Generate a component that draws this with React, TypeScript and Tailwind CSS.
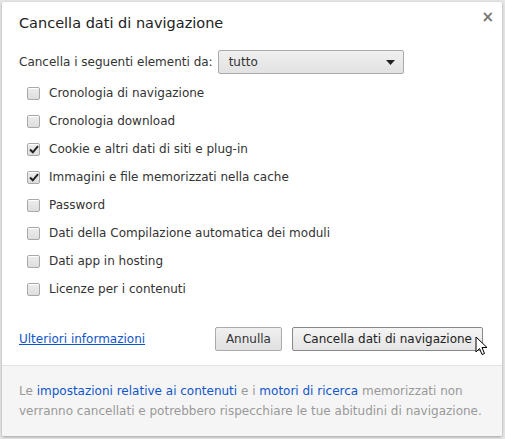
import React from 'react';

const items = [
  { label: 'Cronologia di navigazione', checked: false },
  { label: 'Cronologia download', checked: false },
  { label: 'Cookie e altri dati di siti e plug-in', checked: true },
  { label: 'Immagini e file memorizzati nella cache', checked: true },
  { label: 'Password', checked: false },
  { label: 'Dati della Compilazione automatica dei moduli', checked: false },
  { label: 'Dati app in hosting', checked: false },
  { label: 'Licenze per i contenuti', checked: false },
];

function Checkbox({ checked }: { checked: boolean }) {
  return (
    <span className="flex h-[13px] w-[13px] items-center justify-center rounded-[2px] border border-[#a8a8a8] bg-gradient-to-b from-[#ededed] to-[#dedede] shadow-[inset_0_1px_0_#fff]">
      {checked && (
        <svg width="10" height="9" viewBox="0 0 10 9">
          <path d="M1 4.5 L3.8 7.3 L9 1.2" fill="none" stroke="#222" strokeWidth="2" />
        </svg>
      )}
    </span>
  );
}

export default function App() {
  return (
    <div className="relative h-[439px] w-[505px] bg-[#e6e6e6] p-[2px] font-['DejaVu_Sans',sans-serif] text-[12px] text-[#333]">
      <div className="relative flex h-[434px] w-[500px] flex-col overflow-hidden rounded-[2px] bg-white shadow-[0_1px_3px_rgba(0,0,0,0.3)]">
        {/* close */}
        <span className="absolute right-[8px] top-[4px] text-[15px] font-bold text-[#777]">×</span>

        <div className="px-[17px] pt-[11px]">
          <h1 className="text-[14.5px] leading-[20px] text-[#222]">Cancella dati di navigazione</h1>

          <div className="mt-[17px] flex items-center gap-[5px]">
            <span>Cancella i seguenti elementi da:</span>
            <div className="flex h-[24px] w-[186px] items-center justify-between rounded-[2px] border border-[#aaa] bg-gradient-to-b from-[#f0f0f0] to-[#e2e2e2] pl-[10px] pr-[8px]">
              <span>tutto</span>
              <svg width="9" height="5" viewBox="0 0 9 5">
                <path d="M0 0 L9 0 L4.5 5 Z" fill="#222" />
              </svg>
            </div>
          </div>

          <div className="mt-[5px] flex flex-col">
            {items.map((it) => (
              <label key={it.label} className="flex h-[28px] items-center gap-[9px] pl-[8px]">
                <Checkbox checked={it.checked} />
                <span>{it.label}</span>
              </label>
            ))}
          </div>

          <div className="mt-[24px] flex items-center">
            <a className="text-[#1155cc] underline">Ulteriori informazioni</a>
            <div className="ml-auto flex gap-[10px] pr-[2px]">
              <button className="h-[24px] rounded-[2px] border border-[#aaa] bg-gradient-to-b from-[#f0f0f0] to-[#e0e0e0] px-[10px] text-[#333]">Annulla</button>
              <button className="h-[24px] rounded-[2px] border border-[#888] bg-gradient-to-b from-[#f5f5f5] to-[#e4e4e4] px-[10px] text-[#222]">Cancella dati di navigazione</button>
            </div>
          </div>
        </div>

        <div className="mt-[14px] flex-1 border-t border-[#e5e5e5] bg-[#f5f5f5] px-[17px] pt-[15px] leading-[20px] text-[#999]">
          Le <a className="text-[#1155cc]">impostazioni relative ai contenuti</a> e i{' '}
          <a className="text-[#1155cc]">motori di ricerca</a> memorizzati non verranno cancellati e potrebbero rispecchiare le tue abitudini di navigazione.
        </div>
      </div>

      {/* mouse pointer */}
      <svg className="absolute left-[475px] top-[336px]" width="13" height="20" viewBox="0 0 13 20">
        <path d="M1 1 L1 16 L4.5 12.5 L7 18.5 L9.5 17.5 L7 11.5 L12 11.5 Z" fill="#fff" stroke="#000" strokeWidth="1" strokeLinejoin="round" />
      </svg>
    </div>
  );
}
